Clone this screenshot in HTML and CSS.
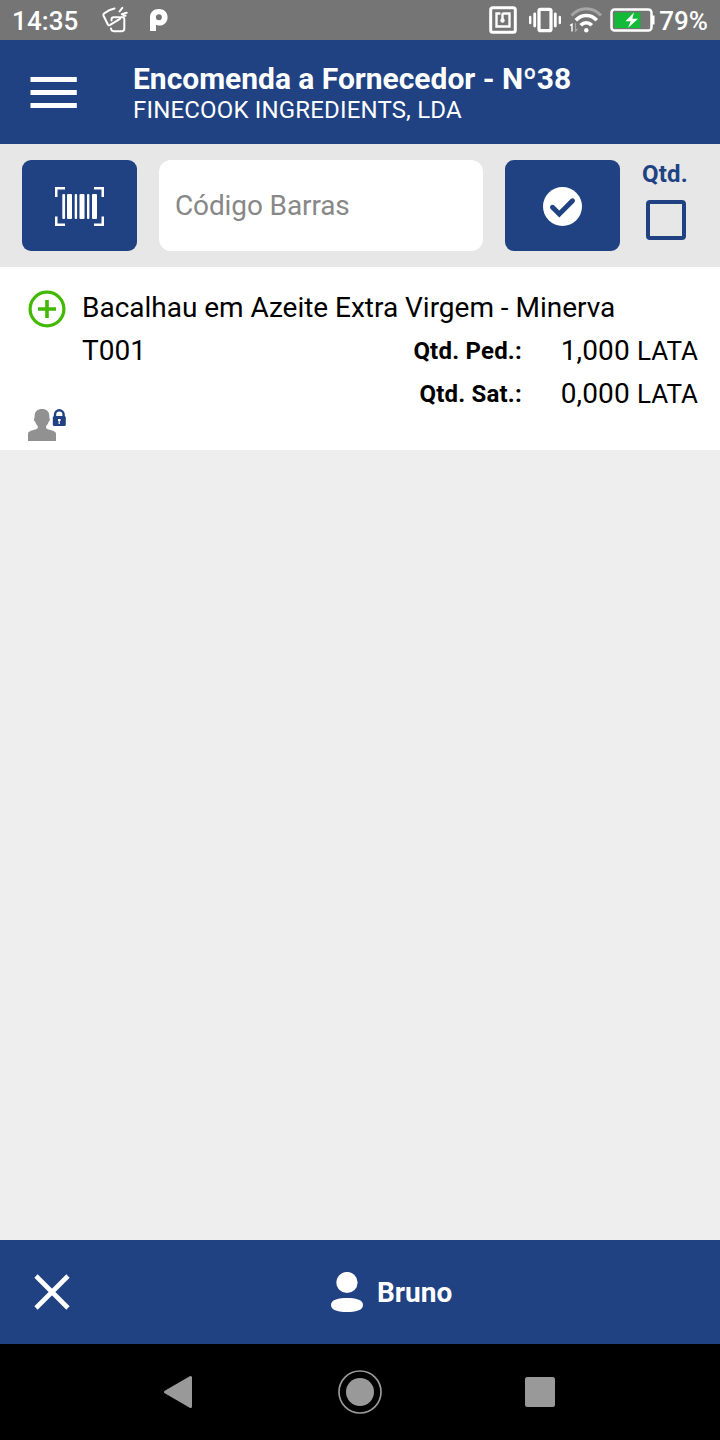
FILE: index.html
```html
<!DOCTYPE html>
<html lang="pt">

<head>
    <meta charset="UTF-8">
    <meta name="viewport" content="width=device-width, initial-scale=1.0">
    <title>Encomenda a Fornecedor</title>
    <link rel="stylesheet" href="styles.css">
</head>

<body>

    <!-- Status bar -->
    <div class="status">
        <span class="status-time">14:35</span>
        <svg width="28" height="28" viewBox="0 0 28 28" fill="none" stroke="#fff" stroke-width="2" stroke-linejoin="round" stroke-linecap="round">
            <path d="M13.500 2.500Q8 3.500 3 7.500q-1 1-.6 2L7 18.800q.6 1 1.700.4L19 12.800"/>
            <path d="M10.500 14.500v-1q0-2.300 2.300-2.300h4.700M10 22.500q.3 2.700 2.700 2.700h7.800q2.800 0 2.800-2.800V13.300q0-2-2-2h-2.600"/>
            <path d="m18.500 5.500 2.800-3.700M20.800 8.200l4.900-1.500M22.500 9.800h2"/>
        </svg>
        <svg class="icon-p" width="20" height="24" viewBox="0 0 20 24">
            <path fill="#fff" fill-rule="evenodd" d="M1 23V9.500C1 4 4.700 1 9.800 1 15 1 18.600 4.300 18.600 9.200S15 17.500 10.500 17.500c-1.500 0-2.800-.3-3.500-.8V23zM9.900 6.300a3 3 0 1 0 0 6 3 3 0 0 0 0-6z"/>
        </svg>

        <div class="status-right">
            <svg width="28" height="28" viewBox="0 0 28 28" fill="none" stroke="#fff">
                <rect x="1.700" y="1.700" width="24.600" height="24.600" rx="2" stroke-width="3"/>
                <path stroke-width="2.400" d="M11.500 7.500h-4v13h13v-13H14.500q-1 0-1 1V14"/>
                <circle cx="13.500" cy="14.500" r="2.200" fill="#fff" stroke="none"/>
            </svg>
            <svg class="icon-vibrate" width="34" height="26" viewBox="0 0 34 26" fill="none" stroke="#fff" stroke-width="2.800" stroke-linecap="round">
                <rect x="11" y="2.300" width="12" height="21.400" rx="1.500" stroke-width="3.200"/>
                <path d="M6.700 7v12M27.300 7v12"/>
                <path stroke-width="2.400" d="M2.200 10v6M31.800 10v6"/>
            </svg>
            <svg class="icon-wifi" width="34" height="28" viewBox="0 0 34 28" fill="none" stroke="#fff" stroke-width="3.600">
                <path stroke="#a5a5a5" stroke-width="3.200" d="M2.500 9.500c8.300-9 21.200-9 29.500 0"/>
                <path d="M6.800 14.300c6-6.500 15-6.500 21 0M11.700 19.300c3.200-3.400 7.900-3.400 11.100 0"/>
                <circle cx="17.300" cy="24.300" r="2.200" fill="#fff" stroke="none"/>
                <path stroke-width="1.400" d="m1 19.500 2-1.200V25.500"/>
                <path stroke="#a5a5a5" stroke-width="1.200" d="M6.500 17v8l2-2"/>
            </svg>
            <svg class="icon-battery" width="45" height="24" viewBox="0 0 45 24">
                <rect x="1.500" y="1.500" width="40" height="21" rx="3" fill="none" stroke="#fff" stroke-width="2.500"/>
                <rect x="42" y="7.500" width="2.500" height="9" fill="#fff"/>
                <rect x="4.500" y="4.500" width="26" height="15.500" fill="#12ba38"/>
                <path fill="#fff" d="m24 4.500-8.500 8.700h5.200l-2.600 6.500 10-9h-5.800z"/>
            </svg>
            <span class="status-level">79%</span>
        </div>
    </div>

    <header>
        <svg class="menu" width="47" height="32" viewBox="0 0 47 32" fill="#fff">
            <rect width="46.300" height="5" x="0.500" y="0"/>
            <rect width="46.300" height="5" x="0.500" y="13"/>
            <rect width="46.300" height="5" x="0.500" y="26"/>
        </svg>
        <div>
            <h1>Encomenda a Fornecedor - Nº38</h1>
            <p class="supplier">FINECOOK INGREDIENTS, LDA</p>
        </div>
    </header>

    <!-- Barcode search -->
    <div class="toolbar">
        <button class="btn" aria-label="Scan">
            <svg width="50" height="40" viewBox="0 0 50 40" fill="#fff">
                <path d="M0 1h10v2.500H2.500V11H0zM39 1h10v10h-2.500V3.500H39zM0 30.500h2.500v7H10V40H0zM46.500 30.500H49V40H39v-2.500h7.500z"/>
                <rect x="7.300" y="8" width="2.800" height="25" rx="1"/>
                <rect x="12" y="8" width="5" height="25" rx="1"/>
                <rect x="19.700" y="8" width="2.400" height="25" rx="1"/>
                <rect x="24.500" y="8" width="5" height="25" rx="1"/>
                <rect x="32" y="8" width="2.400" height="25" rx="1"/>
                <rect x="37" y="8" width="5" height="25" rx="1"/>
            </svg>
        </button>
        <input class="barcode" type="text" placeholder="Código Barras">
        <button class="btn" aria-label="OK">
            <svg width="40" height="40" viewBox="0 0 40 40">
                <circle cx="19.500" cy="20.500" r="19.500" fill="#fff"/>
                <path d="m9.500 21.300 6.800 6.700L29.500 14.800" fill="none" stroke="#204283" stroke-width="5" stroke-linecap="round"/>
            </svg>
        </button>
        <label class="qty">
            <span>Qtd.</span>
            <span class="check"></span>
        </label>
    </div>

    <main>
        <div class="item">
            <div class="item-icons">
                <svg width="38" height="38" viewBox="0 0 38 38" fill="none" stroke="#43b800">
                    <circle cx="19" cy="19" r="16.900" stroke-width="3.200"/>
                    <path stroke-width="3.600" d="M19 10v18M10 19h18"/>
                </svg>
                <svg width="38" height="32" viewBox="0 0 38 32">
                    <path fill="#919191" d="M14 0c4.300 0 7.300 2.500 7.300 7v2c1 .3.800 3-.6 3.800-.6 1.900-1.500 3.300-2.600 4.200v2c1.400 2.400 9.400 2 9.900 5.500V32H0v-7.500c.5-3.500 8.400-3.100 9.800-5.500v-2c-1.100-.9-2-2.300-2.600-4.200-1.400-.8-1.600-3.500-.6-3.800V7c0-4.500 3.100-7 7.400-7z"/>
                    <path fill="none" stroke="#204283" stroke-width="2.400" d="M27 8V5.600a4.300 4.300 0 0 1 8.600 0V8"/>
                    <rect x="24.800" y="7" width="13" height="10" rx="1.500" fill="#204283"/>
                    <path fill="#fff" d="M30 10h2.600v2h-.8v3h-1.200v-3H30z"/>
                </svg>
            </div>
            <div class="item-body">
                <h2>Bacalhau em Azeite Extra Virgem - Minerva</h2>
                <div class="line">
                    <span>T001</span>
                    <span class="label">Qtd. Ped.:</span>
                    <span class="value">1,000 <small>LATA</small></span>
                </div>
                <div class="line">
                    <span class="label">Qtd. Sat.:</span>
                    <span class="value">0,000 <small>LATA</small></span>
                </div>
            </div>
        </div>
    </main>

    <footer>
        <svg class="close" width="36" height="36" viewBox="0 0 36 36" fill="none" stroke="#fff" stroke-width="4.600">
            <path d="m2 2 32 32M34 2 2 34"/>
        </svg>
        <div class="user">
            <svg width="32" height="40" viewBox="0 0 32 40" fill="#fff">
                <circle cx="16" cy="10.500" r="10.600"/>
                <path d="M16 26c8 0 16 1.500 16 7s-8 7-16 7-16-1.500-16-7 8-7 16-7z"/>
            </svg>
            <span>Bruno</span>
        </div>
    </footer>

    <!-- Android navigation -->
    <nav>
        <svg width="44" height="44" viewBox="0 0 44 44">
            <path fill="#999" stroke="#999" stroke-width="3" stroke-linejoin="round" d="M7.500 22 32.500 7.500v29z"/>
        </svg>
        <svg width="44" height="44" viewBox="0 0 44 44">
            <circle cx="22" cy="22" r="21" fill="none" stroke="#999" stroke-width="1.700"/>
            <circle cx="22" cy="22" r="14" fill="#999"/>
        </svg>
        <svg width="44" height="44" viewBox="0 0 44 44">
            <rect x="7" y="7" width="30" height="30" rx="2.500" fill="#999"/>
        </svg>
    </nav>

</body>
</html>
```
FILE: styles.css
```css
:root {
    --blue:  #204283;
    --bar:   #e7e7e7;
    --bg:    #eeeeee;
}

* {
    box-sizing: border-box;
    margin: 0;
    padding: 0;
}

body {
    display: flex;
    flex-direction: column;
    height: 100vh;
    background: var(--bg);
    color: #000;
    font-family: Roboto, sans-serif;
    font-size: 28px;
    overflow: hidden;
}

svg {
    display: block;
    flex-shrink: 0;
}

/* Status bar */
.status {
    display: flex;
    align-items: center;
    height: 40px;
    padding: 0 12px;
    background: #757575;
    color: #fff;
    font-size: 26px;
    font-weight: 500;
}

.status-time,
.status-level {
    padding-top: 2px;
    line-height: 40px;
}

.status-time {
    width: 89px;
    letter-spacing: 0.1px;
}

.icon-p {
    margin-left: 20px;
}

.status-right {
    display: flex;
    align-items: center;
    margin-left: auto;
}

.icon-vibrate {
    margin-left: 11px;
}

.icon-wifi {
    margin-left: 7px;
}

.icon-battery {
    margin-left: 7px;
    margin-right: 4px;
}

/* Header */
header {
    display: flex;
    align-items: center;
    height: 104px;
    padding: 3px 30px 0;
    gap: 56px;
    background: var(--blue);
    color: #fff;
}

.menu {
    margin-top: -2px;
}

h1 {
    font-size: 30px;
    font-weight: 700;
    line-height: 33px;
    letter-spacing: -0.03px;
}

.supplier {
    font-size: 24px;
    line-height: 30px;
    letter-spacing: 0.17px;
}

/* Toolbar */
.toolbar {
    display: flex;
    height: 123px;
    padding: 16px 22px;
    gap: 22px;
    background: var(--bar);
}

.btn {
    display: flex;
    align-items: center;
    justify-content: center;
    width: 115px;
    height: 91px;
    border: none;
    border-radius: 9px;
    background: var(--blue);
}

.barcode {
    width: 324px;
    height: 91px;
    padding: 0 16px;
    border: none;
    border-radius: 12px;
    background: #fff;
    font: inherit;
    letter-spacing: -0.12px;
}

.barcode::placeholder {
    color: #888;
}

.qty {
    display: flex;
    flex-direction: column;
    align-items: center;
    width: 48px;
    gap: 12px;
    color: var(--blue);
    font-size: 24px;
    font-weight: 700;
    line-height: 28px;
    letter-spacing: 0.2px;
}

.qty span:first-child {
    align-self: flex-start;
}

.check {
    width: 40px;
    height: 40px;
    border: 4px solid var(--blue);
    border-radius: 4px;
}

/* List */
main {
    flex: 1;
}

.item {
    display: flex;
    height: 183px;
    padding: 0 22px 0 28px;
    gap: 16px;
    background: #fff;
}

.item-icons {
    display: flex;
    flex-direction: column;
    justify-content: space-between;
    padding: 23px 0 9px;
}

.item-body {
    flex: 1;
    padding-top: 19px;
    line-height: 43px;
}

h2 {
    font-size: 28px;
    font-weight: 400;
    letter-spacing: -0.02px;
}

.line {
    display: flex;
    height: 43px;
}

.label {
    margin-left: auto;
    padding-top: 1px;
    font-size: 24px;
    font-weight: 700;
    letter-spacing: 0.2px;
}

.value {
    width: 176px;
    text-align: right;
    letter-spacing: 0.15px;
}

.value small {
    font-size: 26px;
    letter-spacing: 0;
}

/* Footer */
footer {
    display: flex;
    align-items: center;
    height: 104px;
    padding: 0 34px;
    background: var(--blue);
    color: #fff;
}

.user {
    display: flex;
    align-items: center;
    gap: 14px;
    margin-left: 261px;
    font-weight: 700;
}

nav {
    display: flex;
    align-items: center;
    justify-content: center;
    gap: 136px;
    height: 96px;
    background: #000;
}
```
